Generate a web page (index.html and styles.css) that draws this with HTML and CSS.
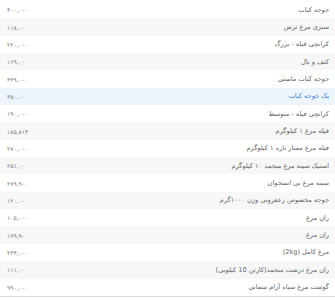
FILE: index.html
```html
<!DOCTYPE html>
<html lang="fa" dir="rtl">
<head>
<meta charset="utf-8">
<link rel="stylesheet" href="styles.css">
</head>
<body>
<div class="list">
  <div class="row"><span class="name">جوجه کباب</span><span class="price">۴۰۰,۰۰۰</span></div>
  <div class="row"><span class="name">سبزی مرغ ترش</span><span class="price">۱۱۸,۰۰۰</span></div>
  <div class="row"><span class="name">کرانچی فیله - بزرگ</span><span class="price">۲۲۰,۰۰۰</span></div>
  <div class="row"><span class="name">کتف و بال</span><span class="price">۱۶۹,۰۰۰</span></div>
  <div class="row"><span class="name">جوجه کباب ماستی</span><span class="price">۳۳۹,۰۰۰</span></div>
  <div class="row active"><span class="name">پک جوجه کباب</span><span class="price">۳۵۰,۰۰۰</span></div>
  <div class="row"><span class="name">کرانچی فیله - متوسط</span><span class="price">۱۹۰,۰۰۰</span></div>
  <div class="row"><span class="name">فیله مرغ ۱ کیلوگرم</span><span class="price">۱۸۵,۸۱۴</span></div>
  <div class="row"><span class="name">فیله مرغ ممتاز تازه ۱ کیلوگرم</span><span class="price">۲۷۰,۰۰۰</span></div>
  <div class="row"><span class="name">استیک سینه مرغ منجمد ۱۰ کیلوگرم</span><span class="price">۲۵۱,۰۰۰</span></div>
  <div class="row"><span class="name">سینه مرغ بی استخوان</span><span class="price">۲۷۹,۹۰۰</span></div>
  <div class="row"><span class="name">جوجه مخصوص زعفرونی وزن ۱۰۰۰گرم</span><span class="price">۱۲۰,۰۰۰</span></div>
  <div class="row"><span class="name">ران مرغ</span><span class="price">۱۰۵,۰۰۰</span></div>
  <div class="row"><span class="name">ران مرغ</span><span class="price">۱۷۹,۹۰۰</span></div>
  <div class="row"><span class="name">مرغ کامل (2kg)</span><span class="price">۲۳۴,۰۰۰</span></div>
  <div class="row"><span class="name">ران مرغ درشت منجمد(کارتن 10 کیلویی)</span><span class="price">۱۱۱,۰۰۰</span></div>
  <div class="row"><span class="name">گوشت مرغ سیاه آرام سمانی</span><span class="price">۹۹۰,۰۰۰</span></div>
</div>
</body>
</html>
```
FILE: styles.css
```css
html, body {
  margin: 0;
  padding: 0;
  background: #ffffff;
  overflow: hidden;
}
body {
  font-family: "DejaVu Sans", sans-serif;
}
.list {
  padding-top: 1px;
  display: flex;
  flex-direction: column;
}
.row {
  height: 17.35px;
  display: flex;
  justify-content: space-between;
  align-items: center;
  padding: 0 6px 0 7px;
  background: #ffffff;
}
.row:nth-child(even) {
  background: #f7f7f8;
}
.row:last-child {
  border-bottom: 1px solid #dcdcdc;
}
.row.active {
  background: #eef4fc;
}
.name {
  font-size: 6.6px;
  color: #666666;
}
.price {
  font-size: 6px;
  color: #777777;
  direction: ltr;
}
.row.active .name {
  color: #3c7fd6;
}
```
